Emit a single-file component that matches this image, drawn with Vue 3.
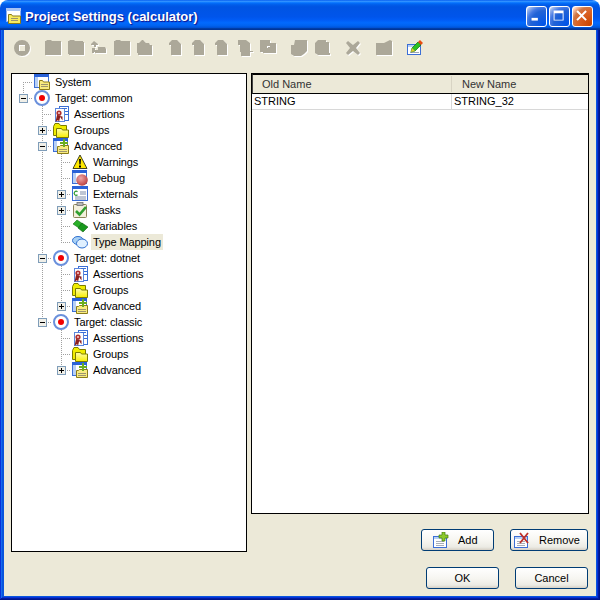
<script setup>
const toolGroups = [
  ['t-ring'],
  ['t-folder', 't-folder2', 't-tag', 't-folder', 't-foldup'],
  ['t-doc', 't-doc', 't-doc', 't-docb', 't-docf'],
  ['t-rot', 't-rot2'],
  ['t-x'],
  ['t-open'],
  ['edit']
]

const rows = [
  { cells: ['r'], icon: 'sys', text: 'System' },
  { cells: ['e'], exp: 'minus', icon: 'target', text: 'Target: common' },
  { cells: ['', 't'], icon: 'assert', text: 'Assertions' },
  { cells: ['', 't'], exp: 'plus', icon: 'folder', text: 'Groups' },
  { cells: ['', 't'], exp: 'minus', icon: 'adv', text: 'Advanced' },
  { cells: ['', 'v', 't'], icon: 'warn', text: 'Warnings' },
  { cells: ['', 'v', 't'], icon: 'debug', text: 'Debug' },
  { cells: ['', 'v', 't'], exp: 'plus', icon: 'ext', text: 'Externals' },
  { cells: ['', 'v', 't'], exp: 'plus', icon: 'tasks', text: 'Tasks' },
  { cells: ['', 'v', 't'], icon: 'vars', text: 'Variables' },
  { cells: ['', 'v', 'l'], icon: 'type', text: 'Type Mapping', sel: true },
  { cells: ['', 't'], exp: 'minus', icon: 'target', text: 'Target: dotnet' },
  { cells: ['', 'v', 't'], icon: 'assert', text: 'Assertions' },
  { cells: ['', 'v', 't'], icon: 'folder', text: 'Groups' },
  { cells: ['', 'v', 'l'], exp: 'plus', icon: 'adv', text: 'Advanced' },
  { cells: ['', 'l'], exp: 'minus', icon: 'target', text: 'Target: classic' },
  { cells: ['', '', 't'], icon: 'assert', text: 'Assertions' },
  { cells: ['', '', 't'], icon: 'folder', text: 'Groups' },
  { cells: ['', '', 'l'], exp: 'plus', icon: 'adv', text: 'Advanced' }
]
</script>

<template>
  <div class="window">
    <svg class="defs" aria-hidden="true">
      <defs>
        <radialGradient id="ball" cx="0.4" cy="0.35" r="0.7">
          <stop offset="0" stop-color="#f0a8a8" />
          <stop offset="1" stop-color="#b83a3a" />
        </radialGradient>
        <linearGradient id="fold" x1="0" y1="0" x2="0" y2="1">
          <stop offset="0" stop-color="#ffffb0" />
          <stop offset="1" stop-color="#f8ee00" />
        </linearGradient>
      </defs>

      <symbol id="win" viewBox="0 0 16 16">
        <rect x="0.5" y="0.5" width="14" height="13" fill="#fff" stroke="#3c6fd6" />
        <rect x="0" y="0" width="15" height="3" fill="#2a62d8" />
        <rect x="1" y="3" width="3" height="10" fill="#b8d0f4" />
      </symbol>
      <symbol id="sys" viewBox="0 0 16 16">
        <use href="#win" width="16" height="16" />
        <path d="M5.5 6.500h3l1 1.500h6v7.500h-10z" fill="#f8ec80" stroke="#8c7c18" />
        <path d="M7 10.500h7M7 12.500h7" stroke="#9c9470" />
      </symbol>
      <symbol id="adv" viewBox="0 0 16 16">
        <use href="#win" width="16" height="16" />
        <path d="M4.500 8.500h2l1-1h8v8h-11z" fill="#f8ec80" stroke="#8c7c18" />
        <path d="M6 11.500h8M6 13.500h8" stroke="#9c9470" />
        <path d="M10 1h2v3h3v2h-3v3h-2V6H7V4h3z" fill="#6cae20" />
      </symbol>
      <symbol id="target" viewBox="0 0 16 16">
        <circle cx="8" cy="8" r="7" fill="#fff" stroke="#6a90dc" stroke-width="2" />
        <circle cx="8" cy="8" r="3" fill="#f00000" />
      </symbol>
      <symbol id="assert" viewBox="0 0 16 16">
        <rect x="6.500" y="0.500" width="9" height="14" fill="#fff" stroke="#3c6fd6" />
        <rect x="2.500" y="2.500" width="9" height="13" fill="#fff" stroke="#5c86dc" />
        <path d="M9 2h5v1H9zM12 5h3v1h-3zM12 8h3v1h-3z" fill="#3c6fd6" />
        <circle cx="6" cy="7" r="2.600" fill="#b03030" />
        <circle cx="6" cy="7" r="1" fill="#f4d0d0" />
        <path d="M4 9l-1.500 7 2.500-2 1 2 1.500-6.500zM6.500 10l3 4.500v-4z" fill="#8c2020" />
      </symbol>
      <symbol id="folder" viewBox="0 0 16 16">
        <path d="M0.500 4.500l1.500-3h4l1.500 2h6v10h-13z" fill="#f0ec00" stroke="#7c7c00" />
        <path d="M3.500 6.500h5l1 1.500h6v7.500h-12z" fill="url(#fold)" stroke="#7c7c00" />
      </symbol>
      <symbol id="warn" viewBox="0 0 16 16">
        <path d="M8 1l7 13.500H1z" fill="#ffe800" stroke="#404020" stroke-linejoin="round" />
        <path d="M7 5h2l-.4 5.500h-1.200zM7 11.500h2v2H7z" fill="#000" />
      </symbol>
      <symbol id="debug" viewBox="0 0 16 16">
        <use href="#win" width="16" height="16" />
        <circle cx="10" cy="10" r="5.800" fill="url(#ball)" />
      </symbol>
      <symbol id="ext" viewBox="0 0 16 16">
        <rect x="0.500" y="0.500" width="15" height="14" fill="#fff" stroke="#3c6fd6" />
        <rect x="0" y="0" width="16" height="3" fill="#2a62d8" />
        <path d="M5.500 5.800a2 2 0 1 0 0 3" fill="none" stroke="#2c9a30" stroke-width="1.200" />
        <path d="M8 6h6M8 8h6M3 11h11M3 13h11" stroke="#7c8ca8" />
      </symbol>
      <symbol id="tasks" viewBox="0 0 16 16">
        <rect x="1.500" y="2.500" width="13" height="13" rx="1" fill="#f4f0dc" stroke="#8c8458" />
        <rect x="5" y="0.500" width="6" height="3" fill="#b8b8b8" stroke="#707070" stroke-width="0.800" />
        <path d="M4 9l3.500 3.500L14 5" fill="none" stroke="#30a030" stroke-width="2.600" />
      </symbol>
      <symbol id="vars" viewBox="0 0 16 16">
        <path d="M1 6l4-4 6 4-4 4z" fill="#2ab028" stroke="#187018" stroke-width="0.600" />
        <path d="M6 10l4-5 6 4-5 5z" fill="#18981c" stroke="#106010" stroke-width="0.600" />
      </symbol>
      <symbol id="type" viewBox="0 0 16 16">
        <ellipse cx="6" cy="6.500" rx="5.500" ry="4" fill="#a8d0f4" stroke="#2f70d0" />
        <ellipse cx="10" cy="9.500" rx="5.500" ry="4.500" fill="#e0f0ff" stroke="#2f70d0" />
      </symbol>
      <symbol id="edit" viewBox="0 0 16 16">
        <rect x="0.500" y="4.500" width="13" height="10" fill="#fff" stroke="#3c6fd6" />
        <rect x="1" y="5" width="12" height="2" fill="#b8d0f4" />
        <path d="M3 12.500h9" stroke="#9ca4b4" />
        <path d="M4 12l1-4 6-6 3 3-6 6z" fill="#2cc020" stroke="#0c6c10" stroke-width="0.700" />
        <path d="M4 12l1-4 3 3z" fill="#e8c830" />
        <path d="M11 2l2-2 3 3-2 2z" fill="#e84c10" />
      </symbol>
      <symbol id="doc-add" viewBox="0 0 16 16">
        <rect x="0.500" y="4.500" width="13" height="11" fill="#fff" stroke="#3c6fd6" />
        <rect x="1" y="5" width="12" height="2" fill="#b8d0f4" />
        <path d="M3 9.500h8M3 11.500h8M3 13.500h8" stroke="#a8aeb8" />
        <path d="M9 0h3v3h3v3h-3v3H9V6H6V3h3z" fill="#8cc82c" stroke="#407c10" stroke-width="0.700" />
      </symbol>
      <symbol id="doc-del" viewBox="0 0 16 16">
        <rect x="0.500" y="4.500" width="13" height="11" fill="#fff" stroke="#3c6fd6" />
        <rect x="1" y="5" width="12" height="2" fill="#b8d0f4" />
        <path d="M3 9.500h8M3 11.500h8M3 13.500h8" stroke="#a8aeb8" />
        <path d="M6 1l8 10M14 1L6 11" stroke="#c03028" stroke-width="1.800" />
      </symbol>

      <symbol id="t-ring" viewBox="0 0 16 16">
        <path fill-rule="evenodd" d="M8 0a8 8 0 1 1 0 16A8 8 0 0 1 8 0zM5 5v6h6V5z" fill="#aca899" />
      </symbol>
      <symbol id="t-folder" viewBox="0 0 16 16">
        <path d="M0 1h1l1-1h4l1 1h9v14H0z" fill="#aca899" />
      </symbol>
      <symbol id="t-folder2" viewBox="0 0 16 16">
        <path d="M0 1h1l1-1h4l1 1h8v1h1v13H1v-1H0z" fill="#aca899" />
      </symbol>
      <symbol id="t-tag" viewBox="0 0 16 16">
        <path d="M3 1l4 3v1H5v2H3V5H0V4zM1 8h3v2h3V7h7l1 2v4H4v-1H3v1H1z" fill="#aca899" />
      </symbol>
      <symbol id="t-foldup" viewBox="0 0 16 16">
        <path d="M0 3h2l3-3h1l3 3h3l1 2h2v10H1v-2H0z" fill="#aca899" />
      </symbol>
      <symbol id="t-doc" viewBox="0 0 16 16">
        <path d="M4 0h5l4 4v11H3V5H1V3z" fill="#aca899" />
      </symbol>
      <symbol id="t-docb" viewBox="0 0 16 16">
        <path d="M1 0h8l4 3v8h3v1h-3v4H4v-4H3V5H1z" fill="#aca899" />
      </symbol>
      <symbol id="t-docf" viewBox="0 0 16 16">
        <path fill-rule="evenodd" d="M0 0h10v3h6v10H3v-1H0zM7 6v2h1V7h2V6z" fill="#aca899" />
      </symbol>
      <symbol id="t-rot" viewBox="0 0 16 16">
        <path d="M4 0h12v11l-3 3-3 2H3l-3-2V5h3z" fill="#aca899" />
      </symbol>
      <symbol id="t-rot2" viewBox="0 0 16 16">
        <path d="M4 0h8v2h3v11h1v2H4l-3-2V3z" fill="#aca899" />
      </symbol>
      <symbol id="t-x" viewBox="0 0 16 16">
        <path d="M1 3l2-2 5 4 5-4 2 2-4 5 4 5-2 2-5-4-5 4-2-2 4-5z" fill="#aca899" />
      </symbol>
      <symbol id="t-open" viewBox="0 0 16 16">
        <path d="M0 3h8l2-1 4-2 2 1v14H0z" fill="#aca899" />
      </symbol>
    </svg>

    <header class="titlebar">
      <svg class="title-icon" viewBox="0 0 16 16" width="16" height="16">
        <rect x="0.500" y="0.500" width="14" height="13" fill="#fff" stroke="#8cacec" />
        <rect x="0" y="0" width="15" height="3" fill="#a8c4f4" />
        <path d="M2.500 6.500h3l1 1.500h8v7.500h-12z" fill="#f8ec60" stroke="#8c7c18" />
        <path d="M5 10.500h7M5 12.500h7" stroke="#9c9470" />
      </svg>
      <span class="title">Project Settings (calculator)</span>
      <span class="caps">
        <span class="cap">
          <svg viewBox="0 0 21 21" width="19" height="19"><rect x="5" y="12" width="7" height="3" fill="#fff" /></svg>
        </span>
        <span class="cap">
          <svg viewBox="0 0 21 21" width="19" height="19"><path d="M4 4h11v11H4zM5 7v7h9V7z" fill="#fff" fill-rule="evenodd" /></svg>
        </span>
        <span class="cap close">
          <svg viewBox="0 0 21 21" width="19" height="19"><path d="M4.500 4.500l10 10M14.500 4.500l-10 10" stroke="#fff" stroke-width="2.200" /></svg>
        </span>
      </span>
    </header>

    <section class="frame">
      <nav class="toolbar">
        <div v-for="(group, i) in toolGroups" :key="i" class="tool-group">
          <svg v-for="(tool, j) in group" :key="j" class="tool" :class="{ live: tool === 'edit' }" width="16" height="16">
            <use :href="'#' + tool" width="16" height="16" />
          </svg>
        </div>
      </nav>

      <main class="content">
        <div class="tree">
          <div v-for="(row, i) in rows" :key="i" class="row">
            <span v-for="(cell, k) in row.cells" :key="k" class="cell" :class="cell && 'c-' + cell">
              <span v-if="row.exp && k === row.cells.length - 1" class="exp" :class="row.exp"></span>
            </span>
            <svg class="ico" width="16" height="16"><use :href="'#' + row.icon" width="16" height="16" /></svg>
            <span class="label" :class="{ sel: row.sel }">{{ row.text }}</span>
          </div>
        </div>

        <div class="side">
          <div class="table">
            <div class="thead">
              <span class="th first">Old Name</span>
              <span class="th">New Name</span>
            </div>
            <div class="tr">
              <span class="td first">STRING</span>
              <span class="td">STRING_32</span>
            </div>
          </div>
          <div class="side-btns">
            <button class="btn add">
              <svg width="16" height="16"><use href="#doc-add" width="16" height="16" /></svg>
              <span>Add</span>
            </button>
            <button class="btn remove">
              <svg width="16" height="16"><use href="#doc-del" width="16" height="16" /></svg>
              <span>Remove</span>
            </button>
          </div>
        </div>
      </main>

      <footer class="footer">
        <button class="btn plain">OK</button>
        <button class="btn plain">Cancel</button>
      </footer>
    </section>
  </div>
</template>

<style>
html, body { margin: 0; background: #fff; }
</style>

<style scoped>
.window {
  width: 600px;
  height: 600px;
  display: flex;
  flex-direction: column;
  overflow: hidden;
  font-family: "Liberation Sans", Arial, sans-serif;
  font-size: 11px;
  color: #000;
}
.defs { width: 0; height: 0; position: absolute; }

.titlebar {
  height: 30px;
  flex: none;
  box-sizing: border-box;
  display: flex;
  align-items: center;
  padding: 2px 7px 0 6px;
  border-radius: 8px 8px 0 0;
  background: linear-gradient(180deg, #0058ee 0, #3593ff 4%, #288eff 6%, #127dff 8%, #036ffc 10%, #0262ee 14%, #0057e5 20%, #0054e3 24%, #0055eb 56%, #005bf5 66%, #026afe 76%, #0062ef 86%, #0052d6 92%, #0040ab 94%, #003092 100%);
}
.title-icon { flex: none; }
.title {
  margin-left: 3px;
  flex: 1;
  color: #fff;
  font-weight: 700;
  font-size: 13px;
  text-shadow: 1px 1px 1px #0f1089;
}
.caps { display: flex; gap: 2px; }
.cap {
  width: 21px;
  height: 21px;
  box-sizing: border-box;
  display: flex;
  border: 1px solid #fff;
  border-radius: 3px;
  background: radial-gradient(circle at 90% 90%, #0054e9 0, #2263d5 55%, #4479e4 70%, #a3bbec 90%, #fff 100%);
}
.cap.close {
  background: radial-gradient(circle at 90% 90%, #cc4600 0, #dc6527 55%, #cd7546 70%, #ffccb2 90%, #fff 100%);
}

.frame {
  flex: 1;
  min-height: 0;
  display: flex;
  flex-direction: column;
  box-sizing: border-box;
  padding: 0 4px 4px;
  background: #ece9d8;
  box-shadow: inset -1px -1px #00138c, inset 1px 0 #0831d9, inset -2px -2px #001ea0, inset 2px 0 #166aee, inset -3px -3px #0831d9, inset 3px 0 #0855dd, inset -4px -4px #0855dd, inset 4px 0 #0855dd;
}

.toolbar {
  height: 43px;
  flex: none;
  box-sizing: border-box;
  padding: 10px 0 0 10px;
  display: flex;
  gap: 15px;
}
.tool-group { display: flex; gap: 7px; height: 16px; }
.tool { filter: drop-shadow(1px 1px 0 #fff); }
.tool.live { filter: none; }

.content {
  display: flex;
  gap: 4px;
  padding-left: 7px;
}
.tree {
  width: 236px;
  height: 479px;
  box-sizing: border-box;
  background: #fff;
  border: 1px solid #000;
}
.row {
  height: 16px;
  display: flex;
  padding-left: 2px;
  line-height: 16px;
}
.cell {
  flex: none;
  width: 19px;
  height: 16px;
  background-repeat: no-repeat;
  --dv: repeating-linear-gradient(180deg, #a0a0a0 0 1px, transparent 1px 2px);
  --dh: repeating-linear-gradient(90deg, #a0a0a0 0 1px, transparent 1px 2px);
}
.c-v { background-image: var(--dv); background-size: 1px 16px; background-position: 9px 0; }
.c-t { background-image: var(--dv), var(--dh); background-size: 1px 16px, 10px 1px; background-position: 9px 0, 9px 8px; }
.c-l { background-image: var(--dv), var(--dh); background-size: 1px 9px, 10px 1px; background-position: 9px 0, 9px 8px; }
.c-r { background-image: var(--dv), var(--dh); background-size: 1px 8px, 10px 1px; background-position: 9px 8px, 9px 8px; }
.c-e { background-image: var(--dv), var(--dh); background-size: 1px 8px, 10px 1px; background-position: 9px 0, 9px 8px; }

.exp {
  display: block;
  width: 9px;
  height: 9px;
  margin: 4px 0 0 5px;
  box-sizing: border-box;
  border: 1px solid #7f9db9;
  background-repeat: no-repeat;
  background-color: #f0efe8;
}
.exp.minus {
  background-image: linear-gradient(#000, #000);
  background-size: 5px 1px;
  background-position: 1px 3px;
}
.exp.plus {
  background-image: linear-gradient(#000, #000), linear-gradient(#000, #000);
  background-size: 5px 1px, 1px 5px;
  background-position: 1px 3px, 3px 1px;
}
.ico { flex: none; margin: 0 3px 0 1px; }
.label { padding: 0 2px; white-space: nowrap; color: #000; letter-spacing: -0.1px; }
.label.sel { background: #ece9d8; }

.side { display: flex; flex-direction: column; width: 338px; }
.table {
  height: 441px;
  box-sizing: border-box;
  background: #fff;
  border: 1px solid #000;
}
.thead {
  height: 20px;
  box-sizing: border-box;
  display: flex;
  align-items: center;
  background: #ece9d8;
  border-top: 1px solid #000;
  border-left: 1px solid #444;
  border-bottom: 1px solid #000;
  color: #333;
}
.th { padding-left: 10px; line-height: 16px; }
.th.first { width: 199px; box-sizing: border-box; border-right: 1px solid #d8d4c4; padding-left: 9px; }
.tr {
  height: 16px;
  display: flex;
  line-height: 15px;
  box-sizing: border-box;
  border-bottom: 1px solid #d8d8d8;
}
.td { padding-left: 2px; }
.td.first { width: 200px; box-sizing: border-box; border-right: 1px solid #d8d8d8; }

.side-btns {
  display: flex;
  justify-content: flex-end;
  gap: 16px;
  margin-top: 15px;
  padding-right: 1px;
}
.btn {
  height: 22px;
  box-sizing: border-box;
  border: 1px solid #003c74;
  border-radius: 3px;
  background: linear-gradient(180deg, #fff 0, #f6f5f0 55%, #ecebe4 85%, #d6d0c5 100%);
  font: inherit;
  color: #000;
  display: flex;
  align-items: center;
  justify-content: center;
  padding: 0;
}
.add { width: 73px; justify-content: flex-start; padding-left: 11px; }
.add span { margin-left: 9px; }
.remove { width: 78px; justify-content: flex-start; padding-left: 3px; }
.remove span { margin-left: 9px; }
.footer {
  display: flex;
  justify-content: flex-end;
  gap: 16px;
  margin-top: 15px;
  padding-right: 8px;
}
.plain { width: 73px; }
</style>
